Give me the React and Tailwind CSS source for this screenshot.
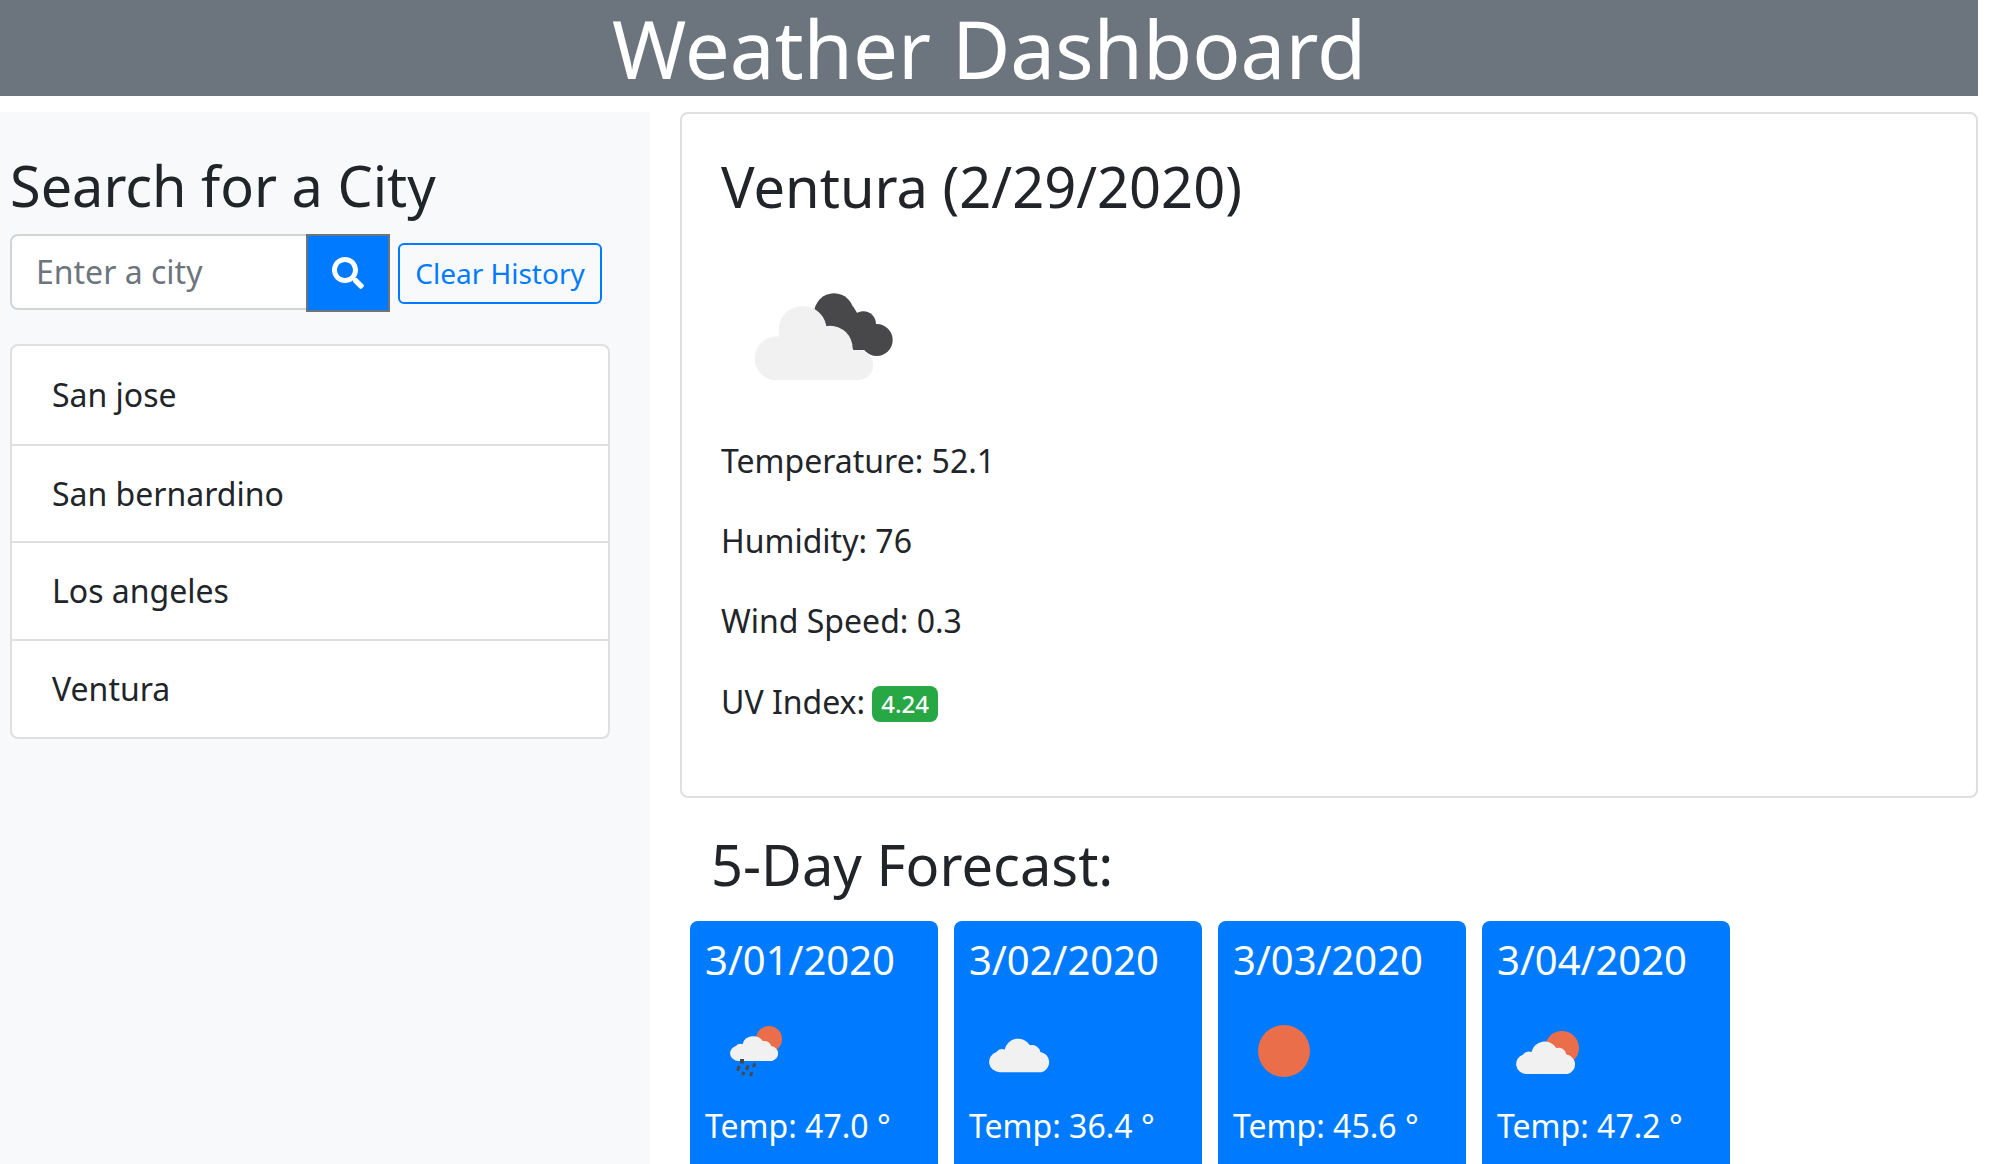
import { FaSearch } from 'react-icons/fa';

const CITIES = ['San jose', 'San bernardino', 'Los angeles', 'Ventura'];

// cloud outline shared by the weather icons, drawn in a 60x38 box
const CLOUD = 'M10 38 A10 10 0 0 1 7 18.5 A7 7 0 0 1 15 16 A13 13 0 0 1 39 12 A8 8 0 0 1 49 18.5 A10 10 0 0 1 50 38 Z';

function RainIcon() {
  return (
    <svg viewBox="0 0 100 100" className="w-[100px] h-[100px]">
      <circle cx="63" cy="38" r="13" fill="#eb6e4b" />
      <path d={CLOUD} fill="#f1f1f1" transform="translate(24 31) scale(0.84 0.76)" />
      <g fill="#48484a">
        <rect x="34" y="58" width="4" height="4.5" />
        <rect x="31" y="65" width="3" height="5" transform="rotate(20 33 67)" />
        <rect x="40" y="64" width="3" height="5" transform="rotate(20 41 66)" />
        <rect x="47" y="62" width="3" height="4" transform="rotate(20 48 63)" />
        <rect x="36" y="71" width="3" height="3.5" transform="rotate(20 38 72)" />
        <rect x="44" y="71" width="3" height="4" transform="rotate(20 45 72)" />
      </g>
    </svg>
  );
}

function CloudIcon() {
  return (
    <svg viewBox="0 0 100 100" className="w-[100px] h-[100px]">
      <path d={CLOUD} fill="#f1f1f1" transform="translate(19 32) scale(1.05 1.03)" />
    </svg>
  );
}

function SunIcon() {
  return (
    <svg viewBox="0 0 100 100" className="w-[100px] h-[100px]">
      <circle cx="50" cy="50" r="26" fill="#eb6e4b" />
    </svg>
  );
}

function SunCloudIcon() {
  return (
    <svg viewBox="0 0 100 100" className="w-[100px] h-[100px]">
      <circle cx="64" cy="47" r="17" fill="#eb6e4b" />
      <path d={CLOUD} fill="#f1f1f1" transform="translate(18 35) scale(1.03 1)" />
    </svg>
  );
}

const FORECAST = [
  { date: '3/01/2020', temp: '47.0', Icon: RainIcon },
  { date: '3/02/2020', temp: '36.4', Icon: CloudIcon },
  { date: '3/03/2020', temp: '45.6', Icon: SunIcon },
  { date: '3/04/2020', temp: '47.2', Icon: SunCloudIcon },
];

export default function App() {
  return (
    <div className="w-[1978px] h-[1164px] overflow-hidden bg-white text-[#212529] font-['Noto_Sans',sans-serif]">
      {/* Header */}
      <div className="h-[96px] bg-[#6c757d] text-white text-center text-[80px] leading-[96px]">Weather Dashboard</div>

      <div className="flex mt-4 h-[1052px]">
        {/* Sidebar */}
        <div className="w-[650px] shrink-0 bg-[#f8f9fa] pl-[10px]">
          <h2 className="text-[55.8px] leading-[64px] mt-[41px]">Search for a City</h2>
          <div className="flex items-center mt-[17px] h-[78px]">
            <div className="w-[296px] h-[76px] self-start bg-white border-2 border-r-0 border-[#ced4da] rounded-l-lg pl-[24px] flex items-center text-[32px] text-[#6c757d]">Enter a city</div>
            <div className="w-[84px] h-[78px] bg-[#007bff] border-2 border-[#6c757d] flex items-center justify-center text-white">
              <FaSearch size={32} />
            </div>
            <div className="ml-[8px] w-[204px] h-[61px] border-2 border-[#007bff] rounded-md flex items-center justify-center text-[#007bff] text-[28px]">Clear History</div>
          </div>
          <div className="w-[600px] mt-[32px] bg-white border-2 border-[#dfdfdf] rounded-lg">
            {CITIES.map((c, i) => (
              <div key={c} className={`h-[97.7px] pl-[40px] flex items-center text-[32px] ${i ? 'border-t-2 border-[#dfdfdf]' : ''}`}>{c}</div>
            ))}
          </div>
        </div>

        {/* Main */}
        <div className="flex-1 ml-[30px]">
          <div className="h-[686px] border-2 border-[#dfdfdf] rounded-lg pl-[39px]">
            <h2 className="text-[56px] leading-[70px] mt-[37px]">Ventura (2/29/2020)</h2>
            <svg viewBox="0 0 900 600" className="w-[300px] h-[200px] -ml-[41px] mt-[29px]">
              <g fill="#48484a">
                <circle cx="462" cy="190" r="60" />
                <circle cx="550" cy="222" r="38" />
                <circle cx="590" cy="270" r="48" />
                <path d="M440 170 L520 170 L600 300 L520 300 Z" />
              </g>
              <g fill="#f1f1f1">
                <circle cx="368" cy="240" r="72" />
                <circle cx="290" cy="325" r="66" />
                <circle cx="450" cy="295" r="68" />
                <circle cx="535" cy="345" r="45" />
                <rect x="290" y="300" width="245" height="90" />
              </g>
            </svg>
            <div className="text-[32px] leading-[40px]">
              <p className="mt-[-9px]">Temperature: 52.1</p>
              <p className="mt-[40px]">Humidity: 76</p>
              <p className="mt-[40px]">Wind Speed: 0.3</p>
              <p className="mt-[41px] flex items-center">
                UV Index:
                <span className="ml-[7px] mt-[3px] w-[66px] h-[36px] bg-[#28a745] rounded-lg text-white text-[24px] font-medium flex items-center justify-center">4.24</span>
              </p>
            </div>
          </div>

          <h2 className="ml-[31px] mt-[31px] text-[56px] leading-[70px]">5-Day Forecast:</h2>

          <div className="flex gap-4 ml-[10px] mt-[22px]">
            {FORECAST.map(({ date, temp, Icon }) => (
              <div key={date} className="w-[248px] h-[300px] bg-[#007bff] rounded-lg text-white px-[15px] shrink-0">
                <div className="text-[40px] leading-[50px] mt-[14px]">{date}</div>
                <div className="mt-[16px] ml-px"><Icon /></div>
                <div className="text-[32px] leading-[44px] mt-[3px]">Temp: {temp} °</div>
              </div>
            ))}
          </div>
        </div>
      </div>
    </div>
  );
}
